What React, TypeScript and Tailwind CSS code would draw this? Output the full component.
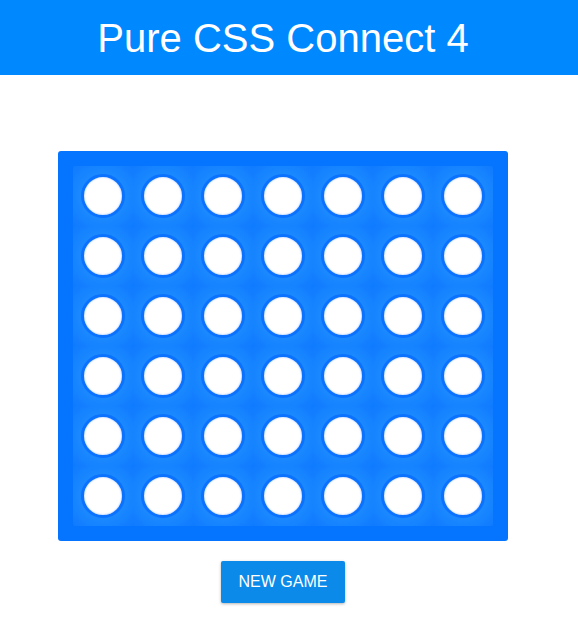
import React from 'react';

const ROWS = 6;
const COLS = 7;

const Cell = () => (
    <div className="w-[60px] h-[60px] flex items-center justify-center bg-[radial-gradient(circle,#1a88ff_55%,#0f7aff_100%)]">
        <div className="w-[44px] h-[44px] rounded-full bg-white border-[3px] border-[#0a72ff] shadow-[inset_0_0_2px_rgba(10,100,255,0.45)]" />
    </div>
);

export default function App() {
    return (
        <div className="min-h-screen bg-white font-['Liberation_Sans',Arial,sans-serif]">
            <header className="h-[75px] bg-[#0088ff] flex items-center justify-center pr-[12px]">
                <h1 className="text-[40px] text-white leading-none">Pure CSS Connect 4</h1>
            </header>

            <main className="flex flex-col items-center pt-[76px] pr-[12px]">
                {/* Board */}
                <div className="w-[450px] h-[390px] bg-[#0575ff] rounded-[3px] p-[15px]">
                    <div className="grid grid-cols-7 rounded-[2px] overflow-hidden">
                        {Array.from({ length: ROWS * COLS }).map((_, i) => (
                            <Cell key={i} />
                        ))}
                    </div>
                </div>

                <button className="mt-[20px] w-[124px] h-[42px] bg-[#0b8ae9] text-white text-[16px] rounded-[2px] shadow-[0_1px_3px_rgba(0,0,0,0.3)]">
                    NEW GAME
                </button>
            </main>
        </div>
    );
}
